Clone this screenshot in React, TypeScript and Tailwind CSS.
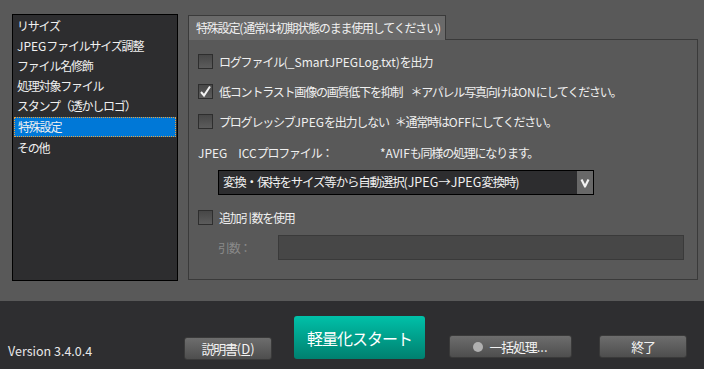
import React from 'react';

const font = 'font-["Meiryo_UI","Noto_Sans_CJK_JP","Noto_Sans",sans-serif]';

// Latin runs keep normal spacing; Japanese text is set tight like Meiryo UI
function L({ children }: { children: React.ReactNode }) {
    return <span className="tracking-normal">{children}</span>;
}

const menuItems: React.ReactNode[] = [
    'リサイズ',
    <><L>JPEG</L>ファイルサイズ調整</>,
    'ファイル名修飾',
    '処理対象ファイル',
    'スタンプ（透かしロゴ）',
    '特殊設定',
    'その他',
];

function Check({ checked }: { checked?: boolean }) {
    return (
        <div className="w-[15px] h-[15px] shrink-0 mr-[6px] border border-[#2e2e2e] bg-gradient-to-b from-[#474747] to-[#5c5c5c] flex items-center justify-center">
            {checked && (
                <svg width="13" height="13" viewBox="0 0 13 13">
                    <path d="M2 7 L5 10.5 L11 1.5" stroke="#f2f2f2" strokeWidth="2" fill="none" />
                </svg>
            )}
        </div>
    );
}

function GrayButton({ children, className }: { children: React.ReactNode; className?: string }) {
    return (
        <div className={`h-[23px] rounded-[3px] border border-[#3a3a3a] bg-gradient-to-b from-[#6d6d6d] to-[#4e4e4e] flex items-center justify-center text-[13px] text-[#f2f2f2] ${className ?? ''}`}>
            {children}
        </div>
    );
}

export default function App() {
    return (
        <div className={`w-[704px] h-[369px] bg-[#595959] flex flex-col text-[#f0f0f0] text-[12px] tracking-[-1.2px] ${font}`}>
            {/* Upper area */}
            <div className="h-[301px] flex pl-[12px] pt-[14px] gap-[10px]">
                <div className="w-[166px] h-[267px] bg-[#2d2d2f] border border-black pt-[1px] px-[1px]">
                    {menuItems.map((item, idx) => (
                        <div
                            key={idx}
                            className={`h-[20px] flex items-center px-[3px] leading-none whitespace-nowrap ${idx === 5 ? 'bg-[#0078d7] border border-dotted border-[#e8a040] h-[18px] my-[1px]' : ''}`}
                        >
                            {item}
                        </div>
                    ))}
                </div>

                <div className="w-[510px] flex flex-col pt-[1px]">
                    <div className="relative z-10 w-[258px] h-[25px] bg-[#6a6a6a] border border-b-0 border-[#3a3a3a] flex items-center px-[7px] -mb-px whitespace-nowrap">
                        特殊設定<L>(</L>通常は初期状態のまま使用してください<L>)</L>
                    </div>
                    <div className="h-[241px] border border-[#3a3a3a] bg-[#595959] pl-[9px] pt-[14px] flex flex-col whitespace-nowrap">
                        <div className="flex items-center h-[15px]">
                            <Check />
                            <span>ログファイル<L>(_SmartJPEGLog.txt)</L>を出力</span>
                        </div>
                        <div className="flex items-center h-[15px] mt-[15px]">
                            <Check checked />
                            <span>低コントラスト画像の画質低下を抑制</span>
                            <span className="ml-[8px]">＊アパレル写真向けは<L>ON</L>にしてください。</span>
                        </div>
                        <div className="flex items-center h-[15px] mt-[15px]">
                            <Check />
                            <span>プログレッシブ<L>JPEG</L>を出力しない</span>
                            <span className="ml-[6px]">＊通常時は<L>OFF</L>にしてください。</span>
                        </div>
                        <div className="flex items-center h-[15px] mt-[16px]">
                            <span className="w-[182px]"><L>JPEG</L>　<L>ICC</L>プロファイル：</span>
                            <span><L>*AVIF</L>も同様の処理になります。</span>
                        </div>
                        <div className="ml-[20px] mt-[10px] w-[376px] h-[25px] bg-[#2d2d2f] border border-black flex items-center">
                            <span className="flex-1 pl-[4px] text-[12.5px]">
                                変換・保持をサイズ等から自動選択<L>(JPEG→JPEG</L>変換時<L>)</L>
                            </span>
                            <div className="w-[16px] h-full bg-[#686868] flex items-center justify-center">
                                <svg width="10" height="10" viewBox="0 0 10 10">
                                    <path d="M1.5 1.5 L5 8.5 L8.5 1.5" stroke="#f2f2f2" strokeWidth="2.2" fill="none" strokeLinejoin="round" />
                                </svg>
                            </div>
                        </div>
                        <div className="flex items-center h-[15px] mt-[15px]">
                            <Check />
                            <span>追加引数を使用</span>
                        </div>
                        <div className="flex items-center mt-[10px] ml-[20px]">
                            <span className="w-[60px] text-[#8a8a8a]">引数：</span>
                            <div className="w-[406px] h-[25px] bg-[#474747] border border-[#3a3a3a]" />
                        </div>
                    </div>
                </div>
            </div>

            {/* Bottom bar */}
            <div className="flex-1 bg-[#2e2e30] flex items-start pl-[8px]">
                <span className="mt-[41px] w-[176px] text-[12.5px] tracking-normal text-[#e8e8e8]">Version 3.4.0.4</span>
                <GrayButton className="mt-[36px] w-[88px]">
                    説明書<L>(<span className="underline">D</span>)</L>
                </GrayButton>
                <div className="ml-[22px] mt-[15px] w-[131px] h-[43px] rounded-[3px] bg-gradient-to-b from-[#00c1a9] to-[#00806f] flex items-center justify-center text-[16px] tracking-[-1px] text-white">
                    軽量化スタート
                </div>
                <GrayButton className="ml-[24px] mt-[34px] w-[123px] gap-[6px]">
                    <span className="w-[10px] h-[10px] rounded-full bg-[#b0b0b0]" />
                    <span>一括処理<L>...</L></span>
                </GrayButton>
                <GrayButton className="ml-[27px] mt-[34px] w-[88px]">終了</GrayButton>
            </div>
        </div>
    );
}
